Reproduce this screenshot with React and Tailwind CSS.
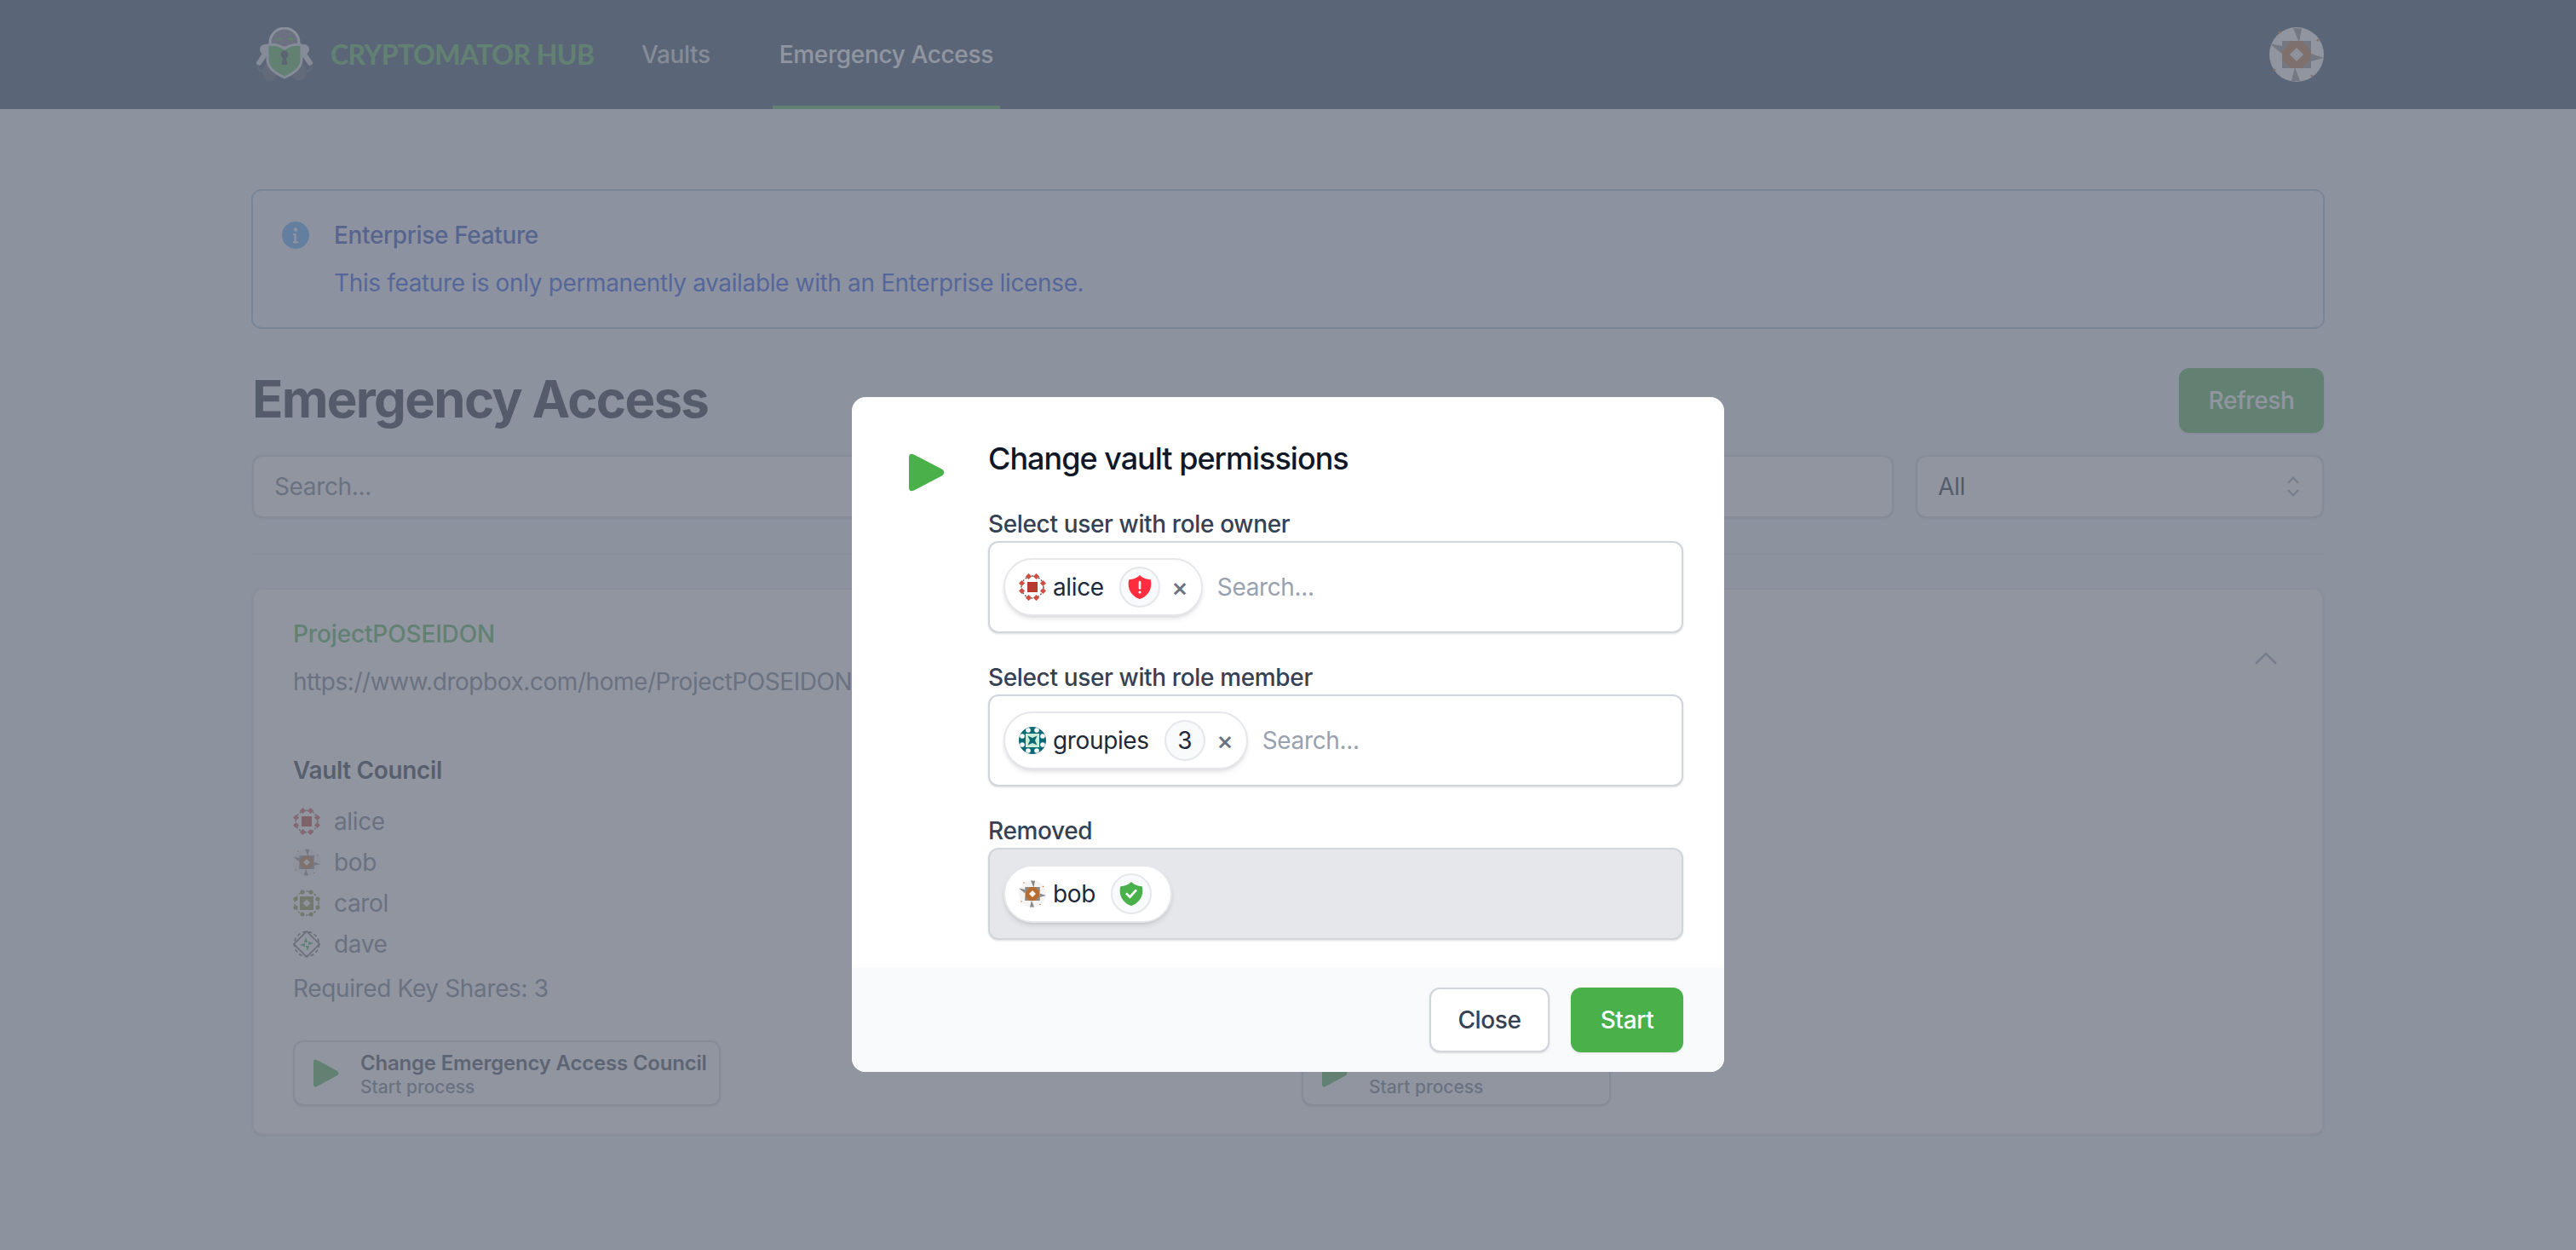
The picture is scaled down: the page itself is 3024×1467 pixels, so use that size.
import React from 'react';

const PlayIcon = ({ className }) => (
  <svg viewBox="0 0 42 45" preserveAspectRatio="none" fill="currentColor" className={className}>
    <path d="M0 5Q0 -1 6 1.500L39.500 19Q43 22.500 39.500 26L6 43.500Q0 46 0 40Z" />
  </svg>
);

const AliceIcon = ({ className }) => (
  <svg viewBox="0 0 32 32" className={className}>
    <circle cx="16" cy="16" r="13" fill="none" stroke="#5b5b5b" strokeWidth="1.400" strokeDasharray="2 2" />
    <rect x="10" y="10" width="12" height="12" fill="#b73b2f" />
    {[[11.5, 3.5], [20.5, 3.5], [11.5, 28.5], [20.5, 28.5], [3.5, 11.5], [3.5, 20.5], [28.5, 11.5], [28.5, 20.5]].map(([x, y]) => (
      <path key={`${x}-${y}`} d={`M${x} ${y - 3.6}L${x + 3.6} ${y}L${x} ${y + 3.6}L${x - 3.6} ${y}Z`} fill="#cf4f42" />
    ))}
  </svg>
);

const BobIcon = ({ className, bg = '#f4f4f4' }) => (
  <svg viewBox="0 0 32 32" className={className}>
    <circle cx="16" cy="16" r="16" fill={bg} />
    <rect x="7.500" y="8" width="17" height="16" fill="#b96c30" />
    {/* blades */}
    <path d="M14 0.500L19 0.800L17.500 9ZM0 9.500L7.500 11L7.500 15.500ZM32 18L24.500 15.500L24.500 20ZM13 31.500L18 31.500L15 23.500Z" fill="#8a8a8a" />
    <path d="M7.500 8L13 8L7.500 14.500ZM24.500 8L24.500 14L19.500 8ZM24.500 24L19 24L24.500 18.500ZM7.500 24L7.500 18.500L12.500 24Z" fill="#8a8a8a" />
    <path d="M16 12L20 16L16 20L12 16Z" fill="#f4f4f4" />
    <circle cx="6" cy="3" r="0.800" fill="#d8752a" />
    <circle cx="28.500" cy="7.500" r="0.800" fill="#d8752a" />
    <circle cx="25" cy="28.500" r="0.800" fill="#d8752a" />
    <circle cx="3" cy="25" r="0.800" fill="#d8752a" />
  </svg>
);

const CarolIcon = ({ className }) => (
  <svg viewBox="0 0 32 32" className={className}>
    <circle cx="16" cy="16" r="14" fill="none" stroke="#8a8a4a" strokeWidth="1.400" strokeDasharray="3 2" />
    <rect x="8" y="8" width="16" height="16" fill="#8f8f3e" />
    <path d="M16 11.500L20.500 16L16 20.500L11.500 16Z" fill="#f4f4f4" />
    {[[11, 3], [21, 3], [11, 29], [21, 29], [3, 11], [3, 21], [29, 11], [29, 21]].map(([x, y]) => (
      <circle key={`${x}-${y}`} cx={x} cy={y} r="2.600" fill="#8f8f3e" />
    ))}
  </svg>
);

const DaveIcon = ({ className }) => (
  <svg viewBox="0 0 32 32" className={className}>
    <path d="M16 1L31 16L16 31L1 16Z" fill="none" stroke="#5f5f5f" strokeWidth="1.600" />
    <circle cx="16" cy="16" r="14.500" fill="none" stroke="#5f5f5f" strokeWidth="1.600" strokeDasharray="4 3" />
    <path d="M15 8L17 14L13 14ZM24 15L18 17L18 13ZM17 24L15 18L19 18ZM8 17L14 15L14 19Z" fill="#38a84f" />
  </svg>
);

const GroupIcon = ({ className }) => (
  <svg viewBox="0 0 32 32" className={className}>
    <circle cx="16" cy="16" r="16" fill="#0b6a75" />
    <rect x="8" y="8" width="16" height="16" fill="#cdeed8" />
    <path d="M10.500 10.500L16 13L21.500 10.500L19 16L21.500 21.500L16 19L10.500 21.500L13 16Z" fill="#0b6a75" />
    {[[11, 4], [21, 4], [11, 28], [21, 28], [4, 11], [4, 21], [28, 11], [28, 21]].map(([x, y]) => (
      <circle key={`${x}-${y}`} cx={x} cy={y} r="2.800" fill="#ffffff" />
    ))}
  </svg>
);

const ShieldIcon = ({ className, children }) => (
  <svg viewBox="0 0 24 24" className={className}>
    <path d="M12 1.500C14.500 4 17.600 5.300 21.500 5.400c.4 1.300.5 2.600.5 4C22 15.600 17.800 20.800 12 22.500 6.200 20.800 2 15.600 2 9.400c0-1.400.1-2.700.5-4C6.400 5.300 9.500 4 12 1.500Z" fill="currentColor" />
    {children}
  </svg>
);

const Logo = () => (
  <svg viewBox="0 0 76 64" className="w-[76px] h-16">
    {/* wheels */}
    <ellipse cx="21" cy="52" rx="9" ry="11" fill="#4b5563" />
    <ellipse cx="55" cy="52" rx="9" ry="11" fill="#4b5563" />
    {/* arms */}
    <path d="M16 30L8 42" stroke="#d1d5db" strokeWidth="6" strokeLinecap="round" />
    <path d="M60 30L68 42" stroke="#d1d5db" strokeWidth="6" strokeLinecap="round" />
    <path d="M7 44a6 6 0 005 8M69 44a6 6 0 01-5 8" fill="none" stroke="#4b5563" strokeWidth="2.500" />
    <circle cx="15" cy="26" r="6" fill="#d1d5db" />
    <circle cx="61" cy="26" r="6" fill="#d1d5db" />
    {/* head */}
    <path d="M21 24V18a17 17 0 0134 0v6Z" fill="#6b7280" stroke="#e5e7eb" strokeWidth="3" />
    <path d="M27 15c2-4 6-4 8 0ZM41 15c2-4 6-4 8 0Z" fill="#49b04a" />
    {/* shield */}
    <path d="M18 21C26 19 33 22 38 25C43 22 50 19 58 21V38C58 48 47 55 38 59C29 55 18 48 18 38Z" fill="#49b04a" stroke="#d1d5db" strokeWidth="3" />
    <circle cx="38" cy="32" r="4.500" fill="#374151" />
    <path d="M36.500 33L34.500 44H41.500L39.500 33Z" fill="#374151" />
  </svg>
);

const Chip = ({ icon, name, badge, removable }) => (
  <div className={`flex items-center h-[68px] rounded-full border-2 border-gray-200 bg-white shadow-md pl-4 ${removable ? 'pr-[17px]' : 'pr-[22px]'}`}>
    {icon}
    <span className="ml-2 text-[28px] leading-10 text-gray-800">{name}</span>
    <span className="ml-[18px] w-12 h-12 flex items-center justify-center rounded-full border-2 border-gray-200 bg-gray-50 text-[28px] text-gray-800">
      {badge}
    </span>
    {removable && <span className="ml-[15px] w-4 flex justify-center text-[30px] leading-none font-medium text-gray-500">×</span>}
  </div>
);

const UserSelect = ({ label, disabled, chip, search }) => (
  <div>
    <div className="text-[28px] leading-10 font-medium text-gray-700">{label}</div>
    <div className={`flex items-center gap-[17px] h-[108px] px-4 rounded-xl border-2 border-gray-300 shadow-sm ${disabled ? 'bg-gray-200' : 'bg-white'}`}>
      {chip}
      {search && <span className="text-[28px] leading-10 text-gray-400">Search...</span>}
    </div>
  </div>
);

const ActionButton = ({ title, className }) => (
  <div className={`flex items-center h-[77px] pl-[22px] pr-3 rounded-xl border-2 border-gray-300 bg-white shadow-sm ${className}`}>
    <PlayIcon className="w-[30px] h-[33px] text-[#49b04a]" />
    <div className="ml-[25px]">
      <div className="text-[24px] leading-8 font-semibold tracking-[-0.2px] text-gray-700 whitespace-nowrap">{title}</div>
      <div className="text-[21px] leading-6 font-medium tracking-normal text-gray-500">Start process</div>
    </div>
  </div>
);

const council = [
  { name: 'alice', Icon: AliceIcon },
  { name: 'bob', Icon: BobIcon },
  { name: 'carol', Icon: CarolIcon },
  { name: 'dave', Icon: DaveIcon },
];

export default function App() {
  return (
    <div className="min-h-screen bg-[#eef2f7] font-['Inter',sans-serif] tracking-[-0.36px]">
      {/* Nav bar */}
      <header className="h-32 bg-[#2b4660]">
        <div className="mx-auto max-w-[2560px] h-full px-16 flex items-center justify-between">
          <div className="flex items-center h-full">
            <Logo />
            <span className="ml-4 w-[308px] font-['Lato',sans-serif] text-[32px] font-bold tracking-[-0.55px] text-[#49b04a] whitespace-nowrap">CRYPTOMATOR HUB</span>
            <nav className="ml-[49px] flex h-full gap-[65px] text-[28px] font-medium">
              <span className="flex items-center px-2 text-gray-300">Vaults</span>
              <span className="flex items-center px-2 text-white border-b-4 border-[#49b04a] pt-1">Emergency Access</span>
            </nav>
          </div>
          <BobIcon className="w-16 h-16" bg="#ffffff" />
        </div>
      </header>

      <main className="mx-auto max-w-[2560px] px-16 pt-[94px]">
        {/* License alert */}
        <div className="-mx-px flex rounded-xl border-2 border-[#a3bfe0] bg-[#eff4fb] pl-[34px] pr-8 py-8">
          <svg viewBox="0 0 32 32" className="w-8 h-8 mt-1 text-blue-400">
            <circle cx="16" cy="16" r="16" fill="currentColor" />
            <circle cx="16" cy="9.500" r="2.200" fill="#eff6ff" />
            <path d="M13 14h4v9h2v2.500h-6V23h1.500v-6.500H13Z" fill="#eff6ff" />
          </svg>
          <div className="ml-[29px]">
            <div className="text-[28px] leading-10 font-medium text-blue-800">Enterprise Feature</div>
            <div className="mt-4 text-[28px] leading-10 text-blue-700">This feature is only permanently available with an Enterprise license.</div>
          </div>
        </div>

        {/* Title row */}
        <div className="mt-[46px] flex items-center justify-between">
          <h1 className="pb-1 text-[60px] leading-[72px] font-bold tracking-[-1.7px] text-gray-900">Emergency Access</h1>
          <button className="h-[76px] w-[170px] rounded-xl bg-[#49b04a] text-[28px] font-medium text-white shadow-sm">Refresh</button>
        </div>

        {/* Filters */}
        <div className="mt-[26px] flex gap-[26px] pb-[41px] border-b-2 border-gray-200">
          <div className="flex-1 flex items-center h-[74px] px-6 rounded-xl border-2 border-gray-300 bg-white shadow-sm text-[28px] text-gray-500">Search...</div>
          <div className="w-[479px] flex items-center justify-between h-[74px] pl-6 pr-[26px] rounded-xl border-2 border-gray-300 bg-white shadow-sm text-[28px] text-gray-900">
            All
            <svg viewBox="0 0 16 26" className="w-4 h-[26px] text-gray-400" fill="none" stroke="currentColor" strokeWidth="2.200">
              <path d="M2 9L8 2.500L14 9M2 17L8 23.500L14 17" />
            </svg>
          </div>
        </div>

        {/* Vault card */}
        <div className="mt-[39px] rounded-xl border-2 border-gray-200 bg-white pl-[46px] pr-[53px] pt-[32px] pb-[32px] shadow-sm">
          <div className="flex items-center justify-between">
            <div>
              <div className="text-[28px] leading-10 font-medium tracking-[-0.15px] text-[#49b04a]">ProjectPOSEIDON</div>
              <div className="mt-4 text-[28px] leading-10 tracking-[-0.45px] text-gray-500">https://www.dropbox.com/home/ProjectPOSEIDON</div>
            </div>
            <svg viewBox="0 0 26 15" className="w-[26px] h-[15px] text-gray-400" fill="none" stroke="currentColor" strokeWidth="2.500">
              <path d="M1 14L13 2L25 14" />
            </svg>
          </div>

          <div className="mt-16 grid grid-cols-[1184px_1fr] items-end">
            <div>
              <div className="text-[28px] leading-10 font-semibold text-gray-800">Vault Council</div>
              <ul className="mt-5 flex flex-col gap-2">
                {council.map(({ name, Icon }) => (
                  <li key={name} className="flex items-center h-10 gap-4 text-[28px] text-gray-500">
                    <Icon className="w-8 h-8" />
                    {name}
                  </li>
                ))}
              </ul>
              <div className="mt-3 text-[28px] leading-10 text-gray-500">Required Key Shares: 3</div>
              <ActionButton title="Change Emergency Access Council" className="mt-[41px] w-[502px]" />
            </div>
            <ActionButton title="Recover Vault" className="w-[363px]" />
          </div>
        </div>
      </main>

      {/* Dialog backdrop */}
      <div className="fixed inset-0 bg-[#6b7280]/75" />

      {/* Dialog */}
      <div className="fixed inset-0 flex justify-center items-start pt-[466px]">
        <div className="w-[1024px] h-[792px] rounded-2xl bg-white overflow-hidden">
          <div className="flex pt-12 pl-[67px] pr-12 pb-8">
            <PlayIcon className="w-[42px] h-[45px] mt-[18px] text-[#49b04a] shrink-0" />
            <div className="ml-[51px] flex-1 min-w-0">
              <h3 className="text-[36px] leading-12 font-medium tracking-[-1px] text-gray-900">Change vault permissions</h3>
              <div className="mt-[33px] flex flex-col gap-8">
                <UserSelect
                  label="Select user with role owner"
                  search
                  chip={
                    <Chip
                      removable
                      name="alice"
                      icon={<AliceIcon className="w-8 h-8" />}
                      badge={
                        <ShieldIcon className="w-8 h-8 text-[#ff2d3d]">
                          <rect x="11" y="6.500" width="2" height="7.500" rx="1" fill="#fff" />
                          <circle cx="12" cy="16.500" r="1.200" fill="#fff" />
                        </ShieldIcon>
                      }
                    />
                  }
                />
                <UserSelect
                  label="Select user with role member"
                  search
                  chip={<Chip removable name="groupies" icon={<GroupIcon className="w-8 h-8" />} badge="3" />}
                />
                <UserSelect
                  label="Removed"
                  disabled
                  chip={
                    <Chip
                      name="bob"
                      icon={<BobIcon className="w-8 h-8" />}
                      badge={
                        <ShieldIcon className="w-8 h-8 text-[#49b04a]">
                          <path d="M7.500 11.500L10.800 14.800L16.500 8.500" fill="none" stroke="#fff" strokeWidth="2" />
                        </ShieldIcon>
                      }
                    />
                  }
                />
              </div>
            </div>
          </div>
          <div className="flex justify-end gap-[25px] bg-gray-50 px-12 py-6 h-[124px]">
            <button className="h-[76px] w-[141px] rounded-xl border-2 border-gray-300 bg-white text-[28px] font-medium text-gray-700 shadow-sm">Close</button>
            <button className="h-[76px] w-[132px] rounded-xl bg-[#49b04a] text-[28px] font-medium text-white shadow-sm">Start</button>
          </div>
        </div>
      </div>
    </div>
  );
}
